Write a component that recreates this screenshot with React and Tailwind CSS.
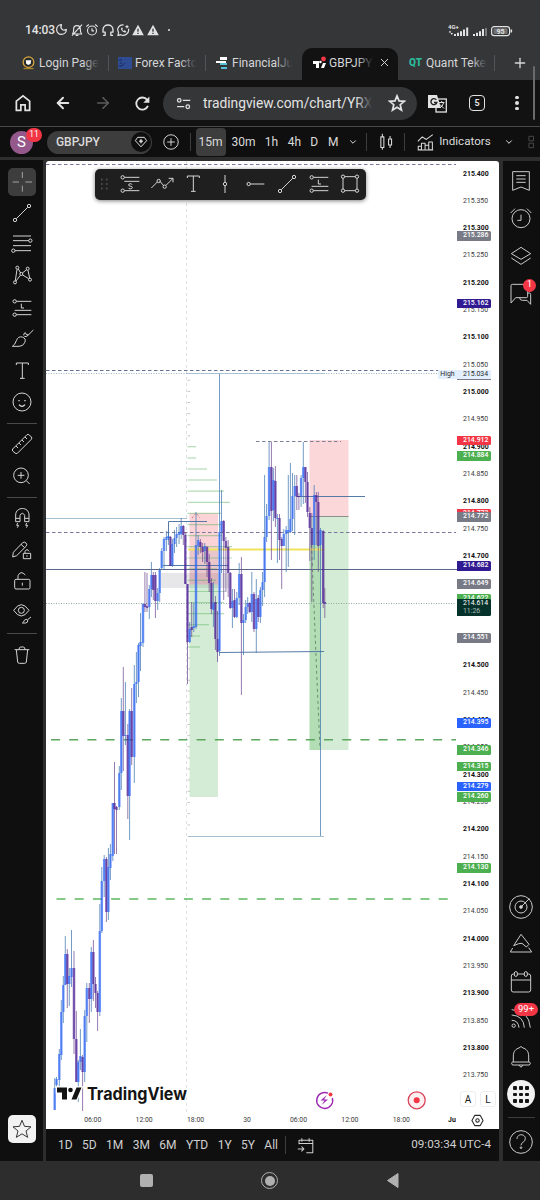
import clsx from 'clsx';
import { ArrowLeft, ArrowRight, ChevronDown, Moon, Plus, X } from 'lucide-react';

const BLUE = 'b';
const PURPLE = 'p';

// x, high, body top, body bottom, low, direction
const candles = [
  [54.7, 1078, 1088, 1110, 1110, BLUE], [56.5, 1077, 1079, 1085, 1087, BLUE], [59.3, 1049, 1054, 1080, 1087, BLUE],
  [61.3, 1000, 1012, 1055, 1060, BLUE], [63.3, 976, 985, 1012, 1023, BLUE], [65.3, 936, 954, 985, 985, BLUE],
  [67.3, 949, 954, 984, 1008, PURPLE], [69.3, 968, 976, 984, 1006, BLUE], [71.5, 930, 968, 977, 987, BLUE],
  [74, 951, 968, 1039, 1054, PURPLE], [76.3, 1011, 1039, 1082, 1082, PURPLE], [78.3, 1060, 1062, 1082, 1102, BLUE],
  [80.4, 1029, 1056, 1062, 1070, BLUE], [82.6, 1055, 1057, 1072, 1111, PURPLE], [84.7, 1010, 1016, 1072, 1082, BLUE],
  [86.8, 983, 988, 1016, 1042, BLUE], [89.3, 983, 988, 999, 1023, PURPLE], [91.3, 947, 952, 999, 1012, BLUE],
  [93.4, 940, 952, 984, 1001, PURPLE], [95.5, 977, 984, 993, 1008, PURPLE], [97.6, 991, 993, 1012, 1031, PURPLE],
  [99.8, 904, 931, 1012, 1016, BLUE], [101.8, 867, 881, 931, 933, BLUE], [104.2, 855, 859, 881, 897, BLUE],
  [106.4, 857, 859, 912, 922, PURPLE], [108.4, 848, 867, 912, 920, BLUE], [110.4, 844, 854, 868, 880, BLUE],
  [112.8, 803, 803, 856, 861, BLUE], [114.5, 762, 803, 809, 854, PURPLE], [116.5, 806, 807, 810, 854, PURPLE],
  [119.3, 766, 773, 807, 810, BLUE], [121.3, 698, 711, 773, 790, BLUE], [123.3, 667, 711, 736, 771, PURPLE],
  [125.4, 682, 735, 736, 745, BLUE], [127.8, 724, 735, 796, 819, PURPLE], [129.6, 709, 711, 796, 840, BLUE],
  [131.7, 688, 711, 757, 765, PURPLE], [134.3, 665, 684, 757, 783, BLUE], [136.4, 652, 682, 684, 703, BLUE],
  [138.5, 643, 645, 682, 697, BLUE], [140.5, 613, 642, 646, 671, BLUE], [143, 603, 604, 643, 647, BLUE],
  [144.9, 572, 604, 607, 612, PURPLE], [147, 573, 606, 608, 612, PURPLE], [149.3, 585, 589, 607, 619, BLUE],
  [151.4, 562, 575, 589, 597, BLUE], [153.3, 572, 575, 590, 600, PURPLE], [155.4, 572, 575, 601, 618, PURPLE],
  [157.7, 588, 593, 601, 610, BLUE], [159.7, 568, 570, 593, 602, BLUE], [161.7, 548, 551, 568, 570, BLUE],
  [164, 537, 539, 551, 570, BLUE], [166.4, 531, 537, 540, 551, BLUE], [168.4, 531, 536, 538, 545, BLUE],
  [170.4, 536, 537, 566, 566, PURPLE], [172.4, 539, 544, 565, 567, BLUE], [174.5, 530, 538, 544, 553, BLUE],
  [176.6, 527, 534, 538, 547, BLUE], [179.1, 524, 532, 535, 544, BLUE], [181.2, 518, 526, 534, 539, BLUE],
  [183.3, 525, 526, 535, 545, PURPLE], [185.3, 532, 535, 584, 584, PURPLE], [187.5, 584, 584, 642, 684, PURPLE],
  [189.7, 622, 629, 642, 643, BLUE], [191.7, 602, 627, 630, 637, PURPLE], [193.8, 603, 626, 628, 632, BLUE],
  [196, 512, 545, 627, 629, BLUE], [198.2, 535, 540, 546, 555, BLUE], [200.4, 539, 542, 547, 553, PURPLE],
  [202.6, 543, 547, 552, 562, PURPLE], [204.8, 543, 546, 551, 564, BLUE], [207, 546, 547, 562, 577, PURPLE],
  [209.2, 554, 562, 583, 592, PURPLE], [211.4, 578, 583, 609, 614, PURPLE], [213.4, 582, 603, 610, 627, BLUE],
  [215.4, 596, 602, 639, 650, PURPLE], [217.5, 611, 639, 652, 662, PURPLE], [219.5, 374, 532, 651, 656, BLUE],
  [221.5, 490, 521, 532, 573, BLUE], [223.7, 520, 521, 541, 600, PURPLE], [225.9, 537, 541, 548, 592, PURPLE],
  [228.2, 540, 547, 573, 597, PURPLE], [230.3, 572, 573, 608, 609, PURPLE], [232.4, 589, 601, 608, 628, BLUE],
  [234.5, 589, 600, 617, 618, PURPLE], [236.8, 592, 598, 617, 618, BLUE], [239.2, 563, 574, 598, 605, BLUE],
  [241.4, 557, 574, 623, 695, PURPLE], [243.5, 614, 620, 623, 655, BLUE], [245.7, 600, 607, 620, 623, BLUE],
  [247.7, 597, 603, 607, 614, BLUE], [249.8, 602, 603, 612, 613, PURPLE], [251.8, 572, 594, 612, 622, BLUE],
  [254, 592, 594, 629, 632, PURPLE], [256.3, 579, 599, 629, 653, BLUE], [258.3, 595, 598, 617, 622, PURPLE],
  [260.4, 587, 590, 617, 623, BLUE], [262.6, 572, 582, 590, 606, BLUE], [264.6, 475, 537, 582, 597, BLUE],
  [266.6, 504, 516, 537, 542, BLUE], [269.1, 442, 467, 516, 520, BLUE], [271.4, 442, 467, 511, 560, PURPLE],
  [273.4, 468, 480, 510, 521, BLUE], [275.4, 466, 481, 518, 527, PURPLE], [277.4, 514, 518, 519, 563, BLUE],
  [279.5, 514, 518, 540, 560, PURPLE], [281.7, 537, 539, 546, 589, PURPLE], [283.8, 529, 534, 546, 546, BLUE],
  [286.2, 526, 530, 534, 572, BLUE], [288.3, 475, 530, 532, 567, BLUE], [290.4, 463, 519, 532, 533, BLUE],
  [292.5, 473, 496, 519, 531, BLUE], [294.7, 475, 486, 496, 535, BLUE], [296.8, 475, 486, 497, 510, PURPLE],
  [298.9, 493, 496, 497, 510, PURPLE], [301.1, 475, 478, 496, 507, BLUE], [303.3, 442, 467, 478, 504, BLUE],
  [305.4, 467, 467, 482, 503, PURPLE], [307.5, 472, 482, 512, 517, PURPLE], [309.8, 507, 513, 528, 561, PURPLE],
  [311.8, 513, 528, 545, 602, PURPLE], [314.2, 485, 495, 545, 560, BLUE], [316.3, 492, 495, 502, 545, PURPLE],
  [318.3, 492, 502, 546, 572, PURPLE], [320.5, 528, 530, 545, 836, BLUE], [323.2, 530, 531, 603, 608, PURPLE],
  [324.8, 588, 602, 604, 618, PURPLE],
];

// volume profile rows: y, right edge
const profile = [
  [446.7, 196], [458, 196], [469, 207], [480, 217], [491.2, 224], [502.3, 230], [513.4, 221], [524.6, 222],
  [535.7, 222], [546.6, 232], [558, 232], [569, 217], [580.3, 216], [591.5, 225], [602.5, 224], [613.6, 224],
  [624.7, 209], [636, 200], [647, 200],
];

const faintRows = [
  380.3, 391.4, 402.5, 413.6, 424.7, 435.8, 658, 669, 680.3, 691, 702, 713.5, 724.5, 735.6, 746.7, 758, 769, 780,
  791.3, 802.5, 813.6, 825,
];

const prices = Array.from({ length: 34 }, (_, i) => (215.4 - i * 0.05).toFixed(3));

const priceTags = [
  { price: '215.286', y: 236, color: 'bg-[#787b86]' },
  { price: '215.162', y: 303.7, color: 'bg-[#311b92]' },
  { price: '214.912', y: 440.5, color: 'bg-[#f23645]' },
  { price: '214.884', y: 456, color: 'bg-[#4caf50]' },
  { price: '214.773', y: 514, color: 'bg-[#f23645]' },
  { price: '214.772', y: 517, color: 'bg-[#787b86]' },
  { price: '214.682', y: 566, color: 'bg-[#311b92]' },
  { price: '214.649', y: 584, color: 'bg-[#787b86]' },
  { price: '214.622', y: 599, color: 'bg-[#4caf50]' },
  { price: '214.551', y: 638, color: 'bg-[#787b86]' },
  { price: '214.395', y: 723, color: 'bg-[#2962ff]' },
  { price: '214.346', y: 750, color: 'bg-[#4caf50]' },
  { price: '214.315', y: 766.6, color: 'bg-[#4caf50]' },
  { price: '214.279', y: 786.5, color: 'bg-[#2962ff]' },
  { price: '214.260', y: 797, color: 'bg-[#4caf50]' },
  { price: '214.130', y: 868, color: 'bg-[#4caf50]' },
];

const CHART_TOP = 161;

// Outline icon, drawn on an 84 unit grid at 28px
const Icon = ({ children, className = 'size-7', width = 2.9 }) => (
  <svg
    viewBox="0 0 84 84"
    className={clsx('shrink-0', className)}
    fill="none"
    stroke="currentColor"
    strokeWidth={width}
    strokeLinejoin="round"
  >
    {children}
  </svg>
);

const TextIcon = (props) => (
  <Icon {...props}>
    <path d="M25 24v-6h36v6M43 18v46M36 64h14" />
  </Icon>
);

const TrendIcon = (props) => (
  <Icon {...props}>
    <circle cx="21" cy="63" r="5" />
    <circle cx="63" cy="21" r="5" />
    <path d="M25 59 59 25" />
  </Icon>
);

const PositionIcon = ({ letter, ...props }) => (
  <Icon {...props}>
    <circle cx="20" cy="22" r="5" />
    <circle cx="20" cy="62" r="5" />
    <path d="M25 22h45M25 62h45" />
    <path d={letter === 'S' ? 'M25 34h45' : 'M20 49h50'} />
    <path d={letter === 'S' ? 'M48 44q-1-3-5-3-5 0-5 4 0 3 5 3.500 6 1 6 4 0 4-6 4-5 0-6-3' : 'M40 29v13h8'} />
  </Icon>
);

const StatusBar = () => (
  <div className="flex h-12 shrink-0 items-end bg-[#353638] pb-[11px] pl-[25px] pr-[27px] text-[#e3e3e3]">
    <span className="w-[30px] text-[12px] leading-[14px] font-medium tracking-[-0.1px]">14:03</span>
    <Moon className="mb-px size-[13px]" strokeWidth={2.3} />
    <Icon className="ml-[2px] size-[14px]" width={7}>
      <path d="M14 66h56q-9-8-8-30 0-20-20-20T22 36q1 22-8 30M34 74h16M72 10 12 76" />
    </Icon>
    <Icon className="ml-[1px] size-[14px]" width={7}>
      <circle cx="42" cy="45" r="27" />
      <path d="M42 32v15h12M8 22 23 9M76 22 61 9" />
    </Icon>
    <Icon className="ml-[2px] size-[14px]" width={8}>
      <path d="M12 74h13V55H12V42C12 2 72 2 72 42v13H59v19h13" />
    </Icon>
    <Icon className="ml-[1px] size-[14px]" width={7}>
      <path d="m10 76 6-18C0 30 22 8 46 12M75 34C82 62 50 82 28 70l-18 6M57 22h18M66 13v18" />
      <path d="M30 30q0 22 26 28l5-9-10-5-5 4q-6-3-8-9l3-4-4-8z" fill="currentColor" stroke="none" />
    </Icon>
    {[0, 1].map((n) => (
      <Icon key={n} className="ml-[1px] size-[14px]" width={0}>
        <path d="M42 10 77 73H7z" fill="currentColor" />
        <path d="M38 34h8v19h-8zM38 59h8v7h-8z" fill="#353638" />
      </Icon>
    ))}
    <span className="mb-[6px] ml-[8px] size-[2px] rounded-full bg-[#e3e3e3]" />
    <svg viewBox="0 0 65 13" className="ml-auto h-[13px] w-[65px]" fill="currentColor">
      <text x="0" y="5" fontSize="6" fontWeight="700" fontFamily="Roboto, sans-serif">4G+</text>
      <path d="M2 6.5 3.3 8.5H.7zM3.8 11 2.5 9h2.6z" />
      <path d="M6 10h2v2H6zM9 8.7h2V12H9zM12 7.2h2V12h-2zM15 5.5h2V12h-2zM18.2 3.5h2V12h-2z" />
      <path d="M25 10h2v2h-2zM28 8.7h2V12h-2zM31 7.2h2V12h-2zM34 5h2v7h-2z" />
      <path d="M37 4h2v8h-2z" opacity=".4" />
      <rect x="43.6" y="2.6" width="18" height="9" rx="2.6" fill="none" stroke="currentColor" strokeWidth="1.2" />
      <rect x="45.5" y="4.2" width="14" height="5.8" rx="1" opacity=".35" />
      <path d="M62.6 5.5h1.5v3h-1.5z" />
      <text x="48.500" y="9.8" fontSize="7" fontWeight="700" fontFamily="Roboto, sans-serif">95</text>
    </svg>
  </div>
);

const TabTitle = ({ children, className, fade = 'to-[#353638]' }) => (
  <span className={clsx('relative overflow-hidden leading-5 whitespace-nowrap', className)}>
    {children}
    <span className={clsx('absolute inset-y-0 right-0 w-4 bg-linear-to-r from-transparent', fade)} />
  </span>
);

const BrowserTabs = () => (
  <div className="flex h-8 shrink-0 items-center bg-[#353638] text-[12px] text-[#d5d6d8]">
    <div className="flex h-full w-[108px] items-center pb-[3px] pl-[21px]">
      <Icon className="size-[15px]" width={7}>
        <circle cx="42" cy="40" r="30" stroke="#d8a73c" />
        <circle cx="42" cy="40" r="22" fill="#26282c" stroke="none" />
        <path d="M27 29h30l-3 20-13 7-12-7z" fill="#fff" stroke="none" />
        <path d="M14 76h56" stroke="#a8822e" />
      </Icon>
      <TabTitle className="ml-[3px] w-[60px]">Login Page</TabTitle>
    </div>
    <div className="flex h-full w-[97px] items-center pb-[3px]">
      <span className="h-4 w-px bg-[#515356]" />
      <svg viewBox="0 0 14 12" className="ml-[9px] h-3 w-[14px]">
        <path d="M0 0h14v12H0z" fill="#2f4c93" />
        <path d="M1 3h3M2 6h2M1 9h3l3-3" stroke="#18295a" fill="none" />
      </svg>
      <TabTitle className="ml-[3px] w-[61px]">Forex Facto</TabTitle>
    </div>
    <div className="flex h-full w-[97px] items-center pb-[3px]">
      <span className="h-4 w-px bg-[#515356]" />
      <svg viewBox="0 0 14 14" className="ml-[10px] size-[14px]">
        <path d="M4 1h7v3H4zM0 5h10v2H0z" fill="#fff" />
        <path d="M4 7h7v2H4zM5 11h6v2H5z" fill="#56c1d6" />
      </svg>
      <TabTitle className="ml-[2px] w-[60px]">FinancialJui</TabTitle>
    </div>
    <div className="flex h-full w-[96px] items-center rounded-t-[10px] bg-[#121212] pb-[3px] pl-[10px]">
      <svg viewBox="0 0 14 14" className="size-[14px]">
        <path d="M1 5h6v7H4V8H1zM9 12l2-5h3l-2 5z" fill="#fff" />
        <circle cx="8.4" cy="6" r="1.3" fill="#fff" />
        <circle cx="11.5" cy="3" r="2.4" fill="#f23645" />
      </svg>
      <TabTitle fade="to-[#121212]" className="ml-[3px] w-[44px]">GBPJPY</TabTitle>
      <X className="ml-[5px] size-[13px] shrink-0" strokeWidth={1.8} />
    </div>
    <div className="flex h-full w-[97px] items-center pb-[3px] pl-[11px]">
      <span className="w-[17px] text-[10px] leading-4 font-black text-[#2bb99b]">QT</span>
      <TabTitle className="w-[61px]">Quant Tekel</TabTitle>
      <span className="ml-[7px] h-4 w-px bg-[#515356]" />
    </div>
    <Plus className="mb-[3px] ml-[17px] size-4" strokeWidth={2} />
  </div>
);

const AddressBar = () => (
  <div className="flex h-[47px] shrink-0 items-center border-b border-[#4a4a4a] bg-[#121212] text-[#e3e3e3]">
    <Icon className="ml-[14px] size-[18px]" width={8}>
      <path d="M11 76V33L42 9l31 24v43H52V51H32v25z" strokeLinejoin="miter" />
    </Icon>
    <ArrowLeft className="ml-[22px] size-[18px]" strokeWidth={2.6} />
    <ArrowRight className="ml-[22px] size-[18px] text-[#5c5c5c]" strokeWidth={2.2} />
    <Icon className="ml-[22px] size-[17px]" width={9}>
      <path d="M69 54A30 30 0 1 1 65 24L72 31" />
      <path d="M76 8v30H46z" fill="currentColor" stroke="none" />
    </Icon>
    <div className="ml-[12px] flex h-[33px] w-[254px] items-center rounded-full bg-[#353638] pl-[13px]">
      <Icon className="size-[15px]" width={7}>
        <circle cx="18" cy="24" r="10" />
        <circle cx="66" cy="60" r="10" />
        <path d="M38 24h42M6 60h40" />
      </Icon>
      <TabTitle className="ml-[12px] w-[169px] text-[13.800px]">tradingview.com/chart/YRXc</TabTitle>
      <Icon className="ml-[16px] size-[18px]" width={8}>
        <path d="m42 9 9.5 23 24.5 2-19 16 6 25-21-13-21 13 6-25L8 34l24.5-2z" strokeLinejoin="miter" />
      </Icon>
    </div>
    <svg viewBox="0 0 19 19" className="ml-[11px] size-[19px]">
      <rect x="8" y="5" width="10.3" height="13" fill="none" stroke="#e3e3e3" strokeWidth="1.3" />
      <path d="M0 1h9l4 13H0z" fill="#e3e3e3" />
      <path d="M8.3 5.8A3 3 0 1 0 8.8 8.500H6" fill="none" stroke="#222" strokeWidth="1.4" />
      <path d="M11 8.500h5.500M13.700 7v1.500M15.500 9q-1 3.500-3.500 5M12 10.500l4 4" fill="none" stroke="#e3e3e3" />
    </svg>
    <div className="ml-[22px] flex size-4 shrink-0 items-center justify-center rounded-[4px] border-[1.6px] border-[#e3e3e3] text-[9px] leading-none font-bold">
      5
    </div>
    <div className="ml-[30px] flex flex-col gap-[2px]">
      {[0, 1, 2].map((n) => (
        <span key={n} className="size-[3.5px] rounded-full bg-[#e3e3e3]" />
      ))}
    </div>
    <span className="mb-[6px] ml-[14px] h-[54px] w-[2px] self-end rounded bg-[#6a6a6a]" />
  </div>
);

const ChartHeader = () => (
  <div className="flex h-[30px] shrink-0 items-center bg-[#0f0f0f] text-[12px] text-[#dbdbdb]">
    <div className="relative ml-[10px] flex size-[23px] items-center justify-center rounded-full bg-[#94598a] text-[15px] text-white">
      S
      <span className="absolute -top-[3px] left-[16px] flex h-[14px] w-4 items-center justify-center rounded-full bg-[#f23645] text-[8.5px]">
        11
      </span>
    </div>
    <div className="ml-[14px] flex h-[23px] w-[105px] items-center justify-between rounded-full bg-[#3d3d3d] pr-[1px] pl-[9px] font-medium">
      GBPJPY
      <span className="flex size-5 items-center justify-center rounded-full bg-[#0f0f0f]">
        <Icon className="size-[14px]" width={6}>
          <path d="M22 14h40l14 20-34 37L8 34z" />
          <path d="M42 26v24M31 38h22" strokeWidth="9" />
        </Icon>
      </span>
    </div>
    <Icon className="ml-[11px] size-4" width={5}>
      <circle cx="42" cy="42" r="38" />
      <path d="M42 22v40M22 42h40" />
    </Icon>
    <span className="ml-[11px] h-[18px] w-px bg-[#3d3d3d]" />
    <span className="ml-[5px] flex h-7 w-[30px] items-center justify-center rounded-[4px] bg-[#3d3d3d]">15m</span>
    <span className="w-[36px] text-center">30m</span>
    <span className="w-[20px] text-center">1h</span>
    <span className="w-[26px] text-center">4h</span>
    <span className="w-[14px] text-center">D</span>
    <span className="w-[24px] text-center">M</span>
    <ChevronDown className="ml-[3px] size-[10px]" strokeWidth={2.4} />
    <span className="ml-[8px] h-[18px] w-px bg-[#3d3d3d]" />
    <Icon className="ml-[10px] size-[18px]" width={5}>
      <path d="M18 18h14v50H18zM25 4v14M25 68v10M54 28h14v28H54zM61 14v14M61 56v14" />
    </Icon>
    <span className="ml-[9px] h-[18px] w-px bg-[#3d3d3d]" />
    <Icon className="ml-[12px] size-[17px]" width={5}>
      <path d="M4 36 26 14l20 13L78 3M6 78V60h16v18zM22 78V46h18v32M40 78V56h18v22M58 78V40h18v38zM4 79h76" />
    </Icon>
    <span className="ml-[5px] w-[53px] text-[11.6px]">Indicators</span>
    <ChevronDown className="ml-[12px] size-[10px]" strokeWidth={2.4} />
    <Icon className="ml-[10px] size-[16px] text-[#4a4a4a]" width={5}>
      <path d="M26 12h24v24H26zM26 48h24v24H26z" />
    </Icon>
  </div>
);

const Separator = () => (
  <div className="flex h-[7.500px] w-[30px] items-center">
    <span className="h-px w-full bg-[#4a4a4a]" />
  </div>
);

const LeftToolbar = () => (
  <div className="flex w-[43px] shrink-0 flex-col items-center gap-[3.440px] bg-[#0f0f0f] pt-[8px] text-[#dbdbdb]">
    <span className="rounded-[5px] bg-[#3d3d3d] text-[#a8a8a8]">
      <Icon>
        <path d="M43 12v18M43 53v18M14 42h19M52 42h20" />
      </Icon>
    </span>
    <TrendIcon />
    <Icon>
      <path d="M15 15h54M15 29h47M15 44h54M21 59h48" />
      <circle cx="67" cy="29" r="5" />
      <circle cx="16" cy="59" r="5" />
    </Icon>
    <Icon>
      <circle cx="28" cy="17" r="4.500" />
      <circle cx="59" cy="20" r="4.500" />
      <circle cx="21" cy="61" r="4.500" />
      <circle cx="66" cy="53" r="4.500" />
      <circle cx="40" cy="36" r="4.500" />
      <path d="M27 22 22 56M31 21l7 12M56 23 43 33M60 25l5 23M44 39l18 11M37 40 24 57" />
    </Icon>
    <PositionIcon letter="L" />
    <Icon>
      <path d="M13 64q9-6 12-17 5-14 18-11 13 5 7 17-4 11-17 11zM47 31q0-7 5-8 2 10 10 6L76 15M49 34q6 4 13-5" />
    </Icon>
    <TextIcon />
    <Icon>
      <circle cx="42" cy="42" r="27" />
      <path d="M33 50q9 10 18 0M33 36v4M51 36v4" strokeWidth="4" />
    </Icon>
    <Separator />
    <Icon>
      <path d="M14 57 57 14q4-2 7 1l6 6q3 3 0 7L28 70q-4 2-7-1l-7-6q-2-3 0-6zM24 48l6 6M33 39l6 6M42 30l6 6M51 21l6 6" />
    </Icon>
    <Icon>
      <circle cx="39" cy="40" r="22" />
      <path d="M55 56 65 66M39 30v20M29 40h20" />
    </Icon>
    <Separator />
    <Icon>
      <path d="M23 53V33C23 7 63 7 63 33v20H50V34q-7-12-14 0v19zM23 43h13M50 43h13M29 57l-3 7h6l-4 7M56 57l-3 7h6l-4 7" />
    </Icon>
    <Icon>
      <path d="M16 49 44 20q5-4 10 1t0 10L26 59l-12 4zM39 25l11 10M46 52h22v16H46zM51 52v-6q6-10 12 0M57 58v4" />
    </Icon>
    <Icon>
      <path d="M24 37h38q4 0 4 4v21q0 4-4 4H24q-4 0-4-4V41q0-4 4-4zM30 37V26q8-17 22-2M43 47v9" />
    </Icon>
    <Icon>
      <path d="M17 34q23-34 46 0-23 34-46 0z" />
      <circle cx="40" cy="34" r="9" />
      <path d="M43 72q5-3 6-8 6-6 10-1 2 8-6 9zM59 62l10-8" />
    </Icon>
    <Separator />
    <Icon>
      <path d="M20 26h44M33 26q0-8 5-8h8q5 0 5 8M25 26l4 37q1 4 5 4h16q4 0 5-4l4-37" />
    </Icon>
    <span className="mt-auto mb-[18px] rounded-[5px] bg-[#f2f2f2] text-[#2e2e2e]">
      <Icon>
        <path d="m42 16 7.500 18 19.500 1.500-15 12.500 5 19-17-10.500-17 10.500 5-19-15-12.500L34.500 34z" />
      </Icon>
    </span>
  </div>
);

const DrawingToolbar = () => (
  <div className="absolute top-[8px] left-[49px] flex h-[31px] w-[271px] items-center gap-[3.400px] rounded-[5px] bg-[#1f1f1f] pb-px pl-[5px] text-[#dbdbdb] shadow-[0_1px_4px_rgba(0,0,0,0.5)]">
    <svg viewBox="0 0 9 12" className="mr-[4px] h-3 w-[9px] shrink-0" fill="#5c5c5c">
      {[1.500, 6, 10.500].map((y) => (
        <path key={y} d={`M1 ${y - 0.7}h1.500v1.500h-1.500zM6 ${y - 0.7}h1.500v1.500h-1.500z`} />
      ))}
    </svg>
    <PositionIcon letter="S" />
    <Icon>
      <path d="m10 54 18-18M36 34l11 13M54 46l21-21M62 25h13v12" />
      <circle cx="32" cy="33" r="5" />
      <circle cx="50" cy="50" r="5" />
    </Icon>
    <TextIcon />
    <Icon>
      <circle cx="42" cy="42" r="5" />
      <path d="M42 15v22M42 47v22" />
    </Icon>
    <Icon>
      <circle cx="20" cy="42" r="5" />
      <path d="M25 42h42" />
    </Icon>
    <TrendIcon />
    <PositionIcon letter="L" />
    <Icon>
      <path d="M26 20h32M26 62h32M21 25v32M63 25v32" />
      <circle cx="21" cy="20" r="5" />
      <circle cx="63" cy="20" r="5" />
      <circle cx="21" cy="62" r="5" />
      <circle cx="63" cy="62" r="5" />
    </Icon>
  </div>
);

const ChartCanvas = () => (
  <svg viewBox="46 161 453 968" className="absolute inset-0 h-[968px] w-[453px]" fill="none">
    <path d="M186.500 161V1112" stroke="#e0e1e4" strokeDasharray="3 3" />

    {/* ranges and position boxes */}
    <path d="M161 573h68v15h-68z" fill="#787b86" fillOpacity=".18" />
    <path d="M189.500 513.300H218V584.500H189.500z" fill="#f23645" fillOpacity=".21" />
    <path d="M189.500 549H218V584.500H189.500z" fill="#787b86" fillOpacity=".15" />
    <path d="M189.500 584.500H218V797H189.500z" fill="#4caf50" fillOpacity=".24" />
    <path d="M309.500 440H348.500V516.500H309.500z" fill="#f23645" fillOpacity=".2" />
    <path d="M309.500 516.500H348.500V750H309.500z" fill="#4caf50" fillOpacity=".24" />
    <path d="M309.500 545H320.500V750H309.500z" fill="#4caf50" fillOpacity=".24" />
    <path d="M309.500 516.500H348.500" stroke="#8d8f88" />

    {/* volume profile */}
    {profile.map(([y, right]) => (
      <path key={y} d={`M187.500 ${y}H${right}`} stroke="#4caf50" strokeOpacity=".42" strokeWidth="1.200" />
    ))}
    {faintRows.map((y) => (
      <path key={y} d={`M187.500 ${y}h2.500`} stroke="#9aa89a" strokeOpacity=".6" />
    ))}

    {/* levels */}
    <g stroke="#77779b">
      <path d="M46 164.500H456" strokeDasharray="3.500 2.500" />
      <path d="M46 370.500H456" strokeDasharray="3.500 2.500" stroke="#667292" />
      <path d="M46 532.500H456" strokeDasharray="3.500 2.500" />
      <path d="M256 441.500H341" strokeDasharray="3.500 2.500" stroke="#7b8098" />
      <path d="M46 569.500H457" stroke="#5b6788" />
    </g>
    <path d="M46 373.500H440" stroke="#9db4c4" strokeDasharray="1 1.500" />
    <path d="M46 603.500H456" stroke="#8fa8a0" strokeDasharray="1 1.500" />
    <path d="M187 373.500H325M46 518.500H187M188 836.500H324" stroke="#a6c0d2" />
    <path d="M168.500 540V521.500H207M163 565.500H228M297 496.500H365M219 652.500 324 651.500" stroke="#557aa6" />
    <path d="M188 549.500H324" stroke="#f2e35c" strokeWidth="1.800" />
    <path d="M51 739.800H456" stroke="#5aa75d" strokeWidth="1.500" strokeDasharray="9 9.200" />
    <path d="M56.500 899H450" stroke="#5cb860" strokeWidth="1.500" strokeDasharray="9 9.200" />
    <path d="M311.500 545 317 680 320 749" stroke="#6c8f72" strokeDasharray="3 3" />
    <path d="M192 518 196 513 200 518" stroke="#c27a80" strokeDasharray="2 2" />

    {candles.map(([x, high, top, bottom, low, side]) => (
      <g key={x}>
        <path
          d={`M${x} ${high}V${low}`}
          stroke={side === BLUE ? '#3c74ae' : '#6b478f'}
          strokeOpacity=".85"
          strokeWidth=".850"
        />
        <rect
          x={x - 1.25}
          y={top}
          width="2.500"
          height={Math.max(bottom - top, 1)}
          fill={side === BLUE ? '#2962ff' : '#4a1d96'}
          fillOpacity={side === BLUE ? 0.62 : 0.66}
        />
      </g>
    ))}

    {/* watermark */}
    <g fill="#131313" stroke="#fff" strokeWidth="2.500" paintOrder="stroke">
      <path d="M57 1087.500H67V1099.500H62V1092.500H57zM71.500 1099.500 76.500 1087.500H81.500L76.500 1099.500z" />
      <circle cx="70.500" cy="1090" r="2.300" />
      <text
        x="87"
        y="1099.500"
        fontSize="17"
        fontWeight="700"
        fontFamily="Inter, sans-serif"
        textLength="100"
        lengthAdjust="spacingAndGlyphs"
      >
        TradingView
      </text>
    </g>

    {/* event markers */}
    <path d="M328 1093.200A8 8 0 1 0 332.300 1098" stroke="#9c27b0" strokeWidth="1.400" />
    <path d="m327 1095-6.500 5.500h4l-3 4.500 6.500-5.500h-4z" fill="#9c27b0" />
    <circle cx="330.500" cy="1094.500" r="2" fill="#f23645" />
    <circle cx="416.700" cy="1100.300" r="8.500" fill="#fdeef0" stroke="#d9455a" strokeWidth="1.300" />
    <circle cx="416.700" cy="1100.300" r="3" fill="#f23645" />
  </svg>
);

const PriceTag = ({ price, y, color }) => (
  <span
    className={clsx(
      'absolute left-0 h-[9.500px] w-[34px] rounded-r-[1.500px] pl-[6px] text-[6.900px] leading-[9.500px] font-medium text-white',
      color
    )}
    style={{ top: y - CHART_TOP - 4.75 }}
  >
    {price}
  </span>
);

const PriceScale = () => (
  <div className="absolute top-0 right-0 h-[950px] w-[42px] text-[6.900px] text-[#3a3a3a]">
    <div className="flex flex-col pt-[0.500px] pl-[6px]">
      {prices.map((price, i) => (
        <span
          key={price}
          className={clsx('h-[27.330px] leading-[25px]', i % 2 === 0 && 'font-bold text-[#111]')}
        >
          {price}
        </span>
      ))}
    </div>
    {priceTags.map((tag) => (
      <PriceTag key={tag.price} {...tag} />
    ))}
    <span className="absolute top-[208.500px] -left-[19px] flex h-[9px] w-[19px] items-center justify-center bg-[#e3effd] text-[#2a2a2a]">
      High
    </span>
    <span className="absolute top-[208.500px] left-0 h-[10.500px] w-[34px] border-b border-[#787b86] bg-[#e3effd] pl-[6px] leading-[9px] text-[#2a2a2a]">
      215.034
    </span>
    <div className="absolute top-[438px] left-0 flex h-[17px] w-[34px] flex-col rounded-r-[1.500px] bg-[#05332b] pt-[1px] pl-[6px] leading-[7.500px] text-white">
      <span>214.614</span>
      <span className="text-[#a9bdb8]">11:26</span>
    </div>
  </div>
);

const TimeScale = () => (
  <div className="absolute bottom-0 left-0 flex h-[18px] w-full items-center pl-[21px] text-[6.900px] text-[#3a3a3a]">
    {['06:00', '12:00', '18:00', '30', '06:00', '12:00', '18:00'].map((label, i) => (
      <span key={i} className="w-[51.450px] text-center">{label}</span>
    ))}
    <span className="ml-[21px] font-bold text-[#111]">Ju</span>
    <Icon className="ml-[15px] size-[13px] text-[#2a2a2a]" width={7}>
      <path d="M24 9h36l18 33-18 33H24L6 42z" />
      <circle cx="42" cy="42" r="11" />
    </Icon>
  </div>
);

const RangeBar = () => (
  <div className="flex h-8 shrink-0 items-center bg-[#0f0f0f] text-[12px] text-[#d0d0d0]">
    <div className="flex w-[232px] justify-between pl-[12px]">
      {['1D', '5D', '1M', '3M', '6M', 'YTD', '1Y', '5Y', 'All'].map((range) => (
        <span key={range}>{range}</span>
      ))}
    </div>
    <span className="ml-[7px] h-[18px] w-px bg-[#3d3d3d]" />
    <Icon className="ml-[11px] size-[17px]" width={5}>
      <path d="M10 36V16h68v62H46M10 32h68M24 6v18M60 6v18M4 59h30M22 47l12 12-12 12" />
    </Icon>
    <span className="mr-[8px] ml-auto text-[11.700px]">09:03:34 UTC-4</span>
  </div>
);

const ChartPanel = () => (
  <div className="flex w-[453px] shrink-0 flex-col">
    <div className="relative h-[968px] shrink-0 overflow-hidden rounded-t-[3px] bg-white">
      <ChartCanvas />
      <PriceScale />
      <TimeScale />
      <DrawingToolbar />
      <div className="absolute right-[3px] bottom-[22px] flex gap-1 text-[10px] text-[#1a1a1a]">
        {['A', 'L'].map((mode) => (
          <span
            key={mode}
            className="flex size-4 items-center justify-center rounded-[3px] border border-[#eeeeee] bg-white"
          >
            {mode}
          </span>
        ))}
      </div>
    </div>
    <RangeBar />
  </div>
);

const SideItem = ({ children }) => (
  <div className="relative flex h-[37.500px] w-full shrink-0 items-center justify-center">{children}</div>
);

const RightSidebar = () => (
  <div className="ml-auto flex w-[37px] shrink-0 flex-col items-center bg-[#0f0f0f] pt-px pr-px text-[#d0d0d0]">
    <SideItem>
      <Icon>
        <path d="M17 14h50v56L42 60 17 70zM28 26h28M28 36h28M28 46h28" />
      </Icon>
    </SideItem>
    <SideItem>
      <Icon>
        <circle cx="42" cy="44" r="27" />
        <path d="M42 32v17H31M11 27 24 14M73 27 60 14" />
      </Icon>
    </SideItem>
    <SideItem>
      <Icon>
        <path d="m13 35 29-19 29 19-29 17zM13 48l29 19 29-19" />
      </Icon>
    </SideItem>
    <SideItem>
      <Icon>
        <path d="M12 72V20q0-4 4-4h42q4 0 4 4v32q0 4-4 4H26zM38 56q0 8 8 8h14l11 12V46q0-4-4-4h-5" />
      </Icon>
      <span className="absolute top-[4px] right-[3px] flex size-[13px] items-center justify-center rounded-full bg-[#f23645] text-[9px] text-white">
        1
      </span>
    </SideItem>

    <div className="mt-auto flex w-full flex-col items-center">
      <SideItem>
        <Icon>
          <circle cx="42" cy="42" r="34" />
          <circle cx="42" cy="42" r="18" />
          <circle cx="42" cy="42" r="4" fill="currentColor" />
          <path d="M43 41 67 17" />
        </Icon>
      </SideItem>
      <SideItem>
        <Icon>
          <path d="m42 13 24 30-8 8-13-11-10 1-15 6zM17 54l-7 12h64l-9-13" />
        </Icon>
      </SideItem>
      <SideItem>
        <Icon>
          <path d="M19 18h46q6 0 6 6v42q0 6-6 6H19q-6 0-6-6V24q0-6 6-6zM13 36h58" />
          <rect x="22" y="11" width="9" height="14" rx="4" fill="#0f0f0f" />
          <rect x="52" y="11" width="9" height="14" rx="4" fill="#0f0f0f" />
        </Icon>
      </SideItem>
      <SideItem>
        <Icon>
          <circle cx="20" cy="62" r="5" />
          <path d="M14 46q20 0 22 22M14 30q36 2 38 38M14 14q52 2 56 54" />
        </Icon>
        <span className="absolute top-[2px] right-[1px] flex h-[13px] w-[24px] items-center justify-center rounded-full bg-[#f23645] text-[9.500px] text-white">
          99+
        </span>
      </SideItem>
      <SideItem>
        <Icon>
          <path d="M19 57V39c0-14 8-22 17-24q6-9 12 0c9 2 17 10 17 24v18M19 57h46q5 0 5 4t-4 5H18q-4 0-4-5t5-4zM36 66q6 12 12 0" />
        </Icon>
      </SideItem>
      <SideItem>
        <span className="grid size-7 grid-cols-3 place-content-center gap-[3px] rounded-full bg-[#f2f2f2] px-[6.500px]">
          {Array.from({ length: 9 }, (_, n) => (
            <span key={n} className="size-[3.500px] justify-self-center rounded-[1px] bg-[#141414]" />
          ))}
        </span>
      </SideItem>
      <div className="mt-[4px] h-px w-[27px] bg-[#3d3d3d]" />
      <div className="mt-[10px] mb-[5px]">
        <Icon>
          <circle cx="42" cy="42" r="34" />
          <path d="M30 33c0-17 25-17 25-1 0 11-13 10-13 20" />
          <circle cx="42" cy="59" r="2.500" />
        </Icon>
      </div>
    </div>
  </div>
);

const SystemNav = () => (
  <div className="flex h-[39px] shrink-0 items-center bg-[#2d2d2d] text-[#b0b0b0]">
    <span className="ml-[140px] size-[13px] rounded-[2px] bg-[#b0b0b0]" />
    <span className="ml-[108px] flex size-[17px] items-center justify-center rounded-full border-[1.500px] border-[#b0b0b0]">
      <span className="size-[10px] rounded-full bg-[#b0b0b0]" />
    </span>
    <svg viewBox="0 0 12 15" className="ml-[109px] h-[15px] w-3" fill="currentColor">
      <path d="M11 .5v14L.5 7.500z" stroke="currentColor" strokeLinejoin="round" />
    </svg>
  </div>
);

const App = () => {
  return (
    <div className="flex h-[1200px] w-[540px] flex-col overflow-hidden bg-[#2e2e2e] font-[Roboto,sans-serif]">
      <StatusBar />
      <BrowserTabs />
      <AddressBar />
      <ChartHeader />
      <div className="flex h-[1004px] shrink-0 pt-[4px]">
        <div className="-mt-px flex">
          <LeftToolbar />
        </div>
        <div className="ml-[3px] flex">
          <ChartPanel />
        </div>
        <RightSidebar />
      </div>
      <SystemNav />
    </div>
  );
};

export default App;
